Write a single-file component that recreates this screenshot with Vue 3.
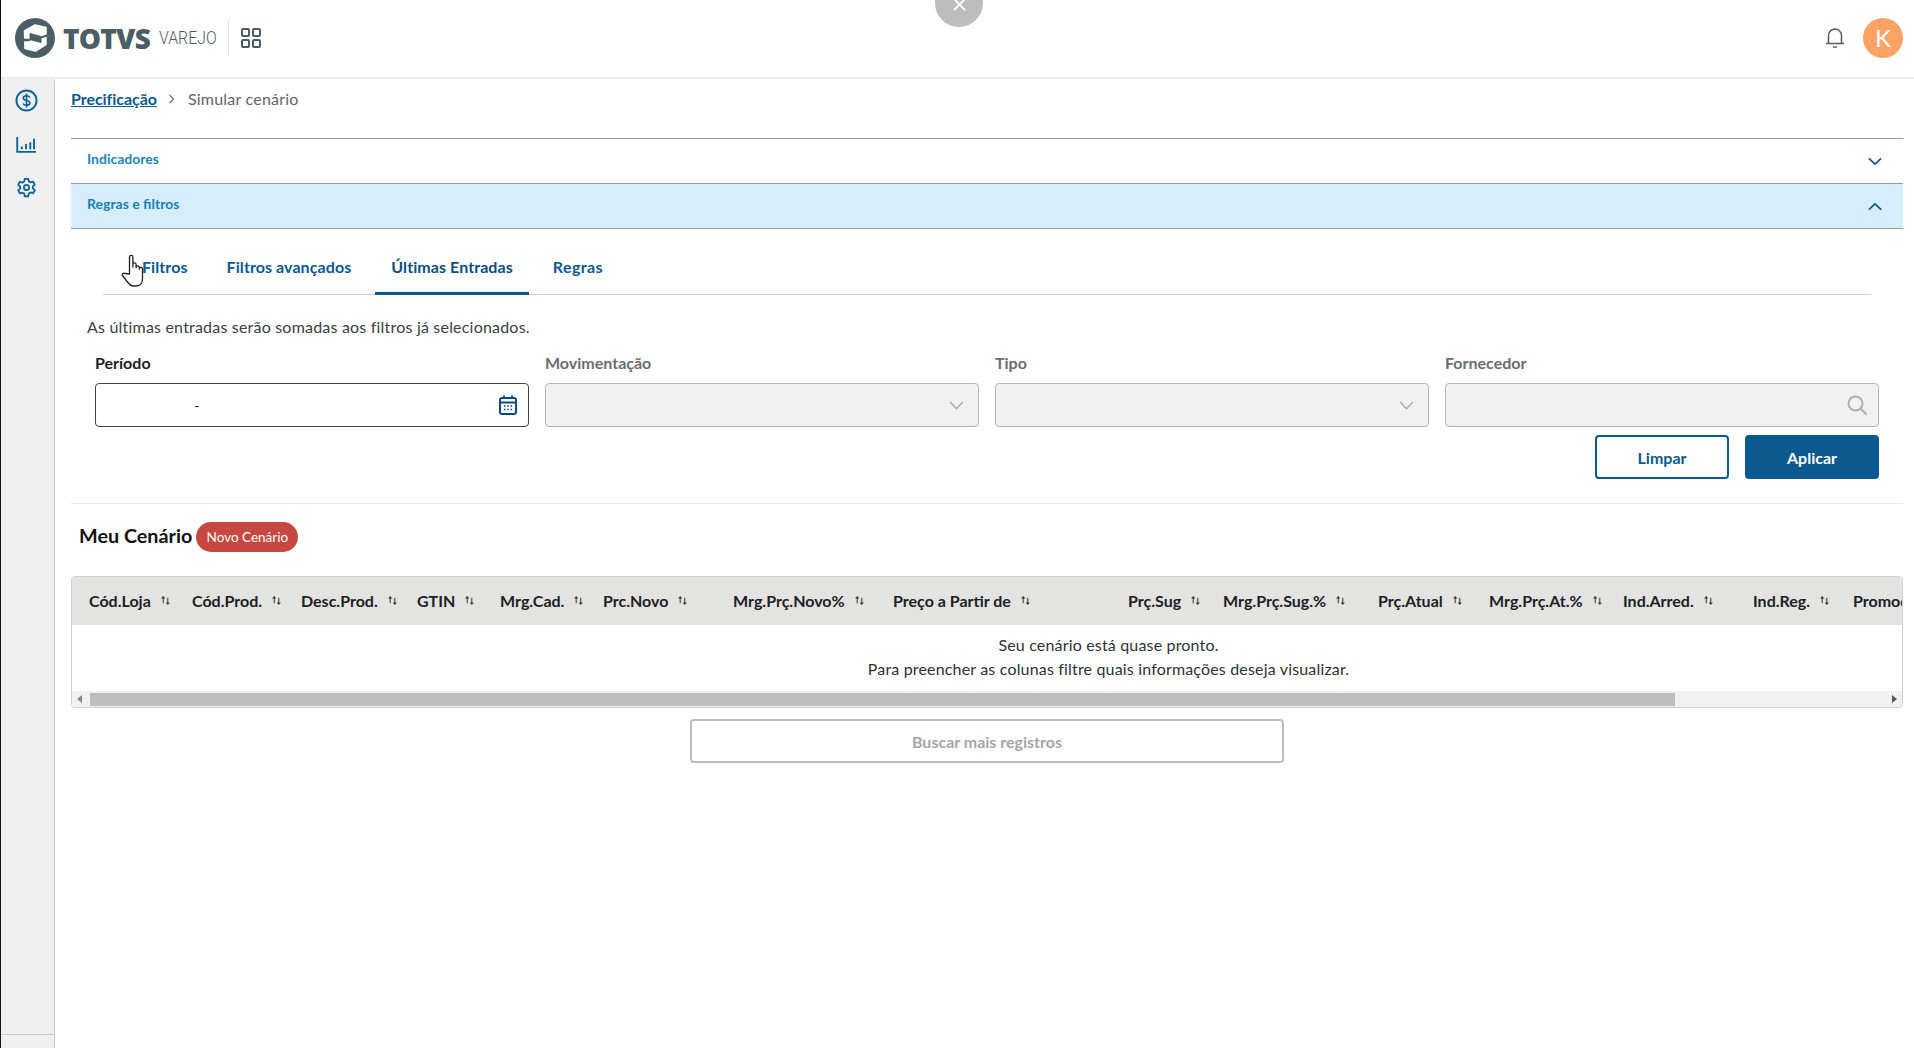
<script setup>
const columns = [
  { label: 'Cód.Loja', width: 120, lead: 17 },
  { label: 'Cód.Prod.', width: 109 },
  { label: 'Desc.Prod.', width: 116 },
  { label: 'GTIN', width: 83 },
  { label: 'Mrg.Cad.', width: 103 },
  { label: 'Prc.Novo', width: 130 },
  { label: 'Mrg.Prç.Novo%', width: 160 },
  { label: 'Preço a Partir de', width: 235 },
  { label: 'Prç.Sug', width: 95 },
  { label: 'Mrg.Prç.Sug.%', width: 155 },
  { label: 'Prç.Atual', width: 111 },
  { label: 'Mrg.Prç.At.%', width: 134 },
  { label: 'Ind.Arred.', width: 130 },
  { label: 'Ind.Reg.', width: 100 },
  { label: 'Promoção', width: 110 }
]
const tabs = ['Filtros', 'Filtros avançados', 'Últimas Entradas', 'Regras']
</script>

<template>
  <div class="page">
    <header class="topbar">
      <div class="brand">
        <svg class="logo" viewBox="0 0 40 40" width="40" height="40">
          <circle cx="20" cy="20" r="20" fill="#4c5d65" />
          <path d="M9.5 13 L20 7 L31 9.5 V26.5 L20.5 33 L10 30.5 Z" fill="#fff" stroke="#fff" stroke-width="1.5" stroke-linejoin="round" />
          <path d="M15 15.5 L26 18.5 V24.5 L15 21.5 Z" fill="#4c5d65" stroke="#4c5d65" stroke-linejoin="round" />
          <path d="M8 20.5 L15 21 L15.5 23 L8 23.5 Z" fill="#4c5d65" />
          <path d="M25.5 18.5 L33 16 V18.5 L25.5 20.5 Z" fill="#4c5d65" />
        </svg>
        <span class="totvs">TOTVS</span>
        <span class="varejo">VAREJO</span>
        <span class="brand-sep"></span>
        <svg class="apps" viewBox="0 0 20 20" width="20" height="20" fill="none" stroke="#4c5d65" stroke-width="2">
          <rect x="1" y="1" width="7" height="7" rx="1" />
          <rect x="12" y="1" width="7" height="7" rx="1" />
          <rect x="1" y="12" width="7" height="7" rx="1" />
          <rect x="12" y="12" width="7" height="7" rx="1" />
        </svg>
      </div>
      <div class="tools">
        <svg viewBox="0 0 20 22" width="20" height="22" fill="none" stroke="#4c5d65" stroke-width="1.5">
          <path d="M1 16.5 H19 M3.5 16.5 V9 a6.5 7 0 0 1 13 0 V16.5" />
          <path d="M8 19.5 Q10 21 12 19.5" />
        </svg>
        <span class="avatar">K</span>
      </div>
    </header>

    <div class="closer">
      <svg viewBox="0 0 14 14" width="13" height="13" stroke="#fff" stroke-width="2"><path d="M1 1 L13 13 M13 1 L1 13" /></svg>
    </div>

    <div class="body">
      <aside class="sidebar">
        <div class="side-icons">
          <svg viewBox="0 0 24 24" width="23" height="23" fill="none" stroke="#0b6296" stroke-width="2">
            <circle cx="12" cy="12" r="10.5" />
            <path d="M15.5 8.8 C15 7.4 13.6 7 12 7 C10 7 8.6 8 8.6 9.5 C8.6 11.2 10 11.7 12 12 C14 12.3 15.5 12.9 15.5 14.6 C15.5 16.1 14 17 12 17 C10.3 17 9 16.5 8.4 15.1 M12 4.8 V19.2" stroke-width="1.7" />
          </svg>
          <svg viewBox="0 0 22 18" width="21" height="17" fill="none" stroke="#0b6296" stroke-width="2">
            <path d="M1.2 1 V16.8 H21" />
            <path d="M6 14 V11 M10.5 14 V8.5 M15 14 V6.5 M19 14 V3" />
          </svg>
          <svg viewBox="0 0 24 24" width="21" height="21" fill="none" stroke="#0b6296" stroke-width="2" stroke-linejoin="round">
            <circle cx="12" cy="12" r="3" />
            <path d="M10 2 h4 l.6 3 a7.5 7.5 0 0 1 2 1.2 l2.9-1 2 3.5 -2.3 2 a7.5 7.5 0 0 1 0 2.4 l2.3 2 -2 3.5 -2.9-1 a7.5 7.5 0 0 1 -2 1.2 L14 22 h-4 l-.6-3 a7.5 7.5 0 0 1 -2-1.2 l-2.9 1 -2-3.5 2.3-2 a7.5 7.5 0 0 1 0-2.4 l-2.3-2 2-3.5 2.9 1 a7.5 7.5 0 0 1 2-1.2 Z" />
          </svg>
        </div>
        <div class="side-foot"></div>
      </aside>

      <main class="content">
        <nav class="crumbs">
          <a class="crumb-link">Precificação</a>
          <svg viewBox="0 0 8 12" width="7" height="10" fill="none" stroke="#5f6b70" stroke-width="1.4"><path d="M1.5 1 L6.5 6 L1.5 11" /></svg>
          <span class="crumb-now">Simular cenário</span>
        </nav>

        <section class="accordion">
          <div class="acc-row">
            <span>Indicadores</span>
            <svg viewBox="0 0 16 10" width="14" height="9" fill="none" stroke="#0a5a8f" stroke-width="2"><path d="M1 1.5 L8 8 L15 1.5" /></svg>
          </div>
          <div class="acc-row open">
            <span>Regras e filtros</span>
            <svg viewBox="0 0 16 10" width="14" height="9" fill="none" stroke="#0a5a8f" stroke-width="2"><path d="M1 8.5 L8 2 L15 8.5" /></svg>
          </div>
        </section>

        <div class="tabs">
          <button v-for="(t, i) in tabs" :key="t" class="tab" :class="{ active: i === 2 }">{{ t }}</button>
        </div>

        <p class="hint">As últimas entradas serão somadas aos filtros já selecionados.</p>

        <div class="fields">
          <div class="field">
            <label class="lbl dark">Período</label>
            <div class="input live">
              <span class="dash">-</span>
              <svg viewBox="0 0 18 20" width="18" height="20" fill="none" stroke="#0a4a7c" stroke-width="2">
                <rect x="1" y="3" width="16" height="16" rx="2" />
                <path d="M1 7.5 H17 M5 0.5 V4 M13 0.5 V4" />
                <path d="M5 11 h1.5 M8.3 11 h1.5 M11.6 11 h1.5 M5 14.5 h1.5 M8.3 14.5 h1.5 M11.6 14.5 h1.5" stroke-width="1.5" />
              </svg>
            </div>
          </div>
          <div class="field">
            <label class="lbl">Movimentação</label>
            <div class="input">
              <svg viewBox="0 0 16 10" width="15" height="9" fill="none" stroke="#a8a8a8" stroke-width="1.6"><path d="M1 1 L8 8.5 L15 1" /></svg>
            </div>
          </div>
          <div class="field">
            <label class="lbl">Tipo</label>
            <div class="input">
              <svg viewBox="0 0 16 10" width="15" height="9" fill="none" stroke="#a8a8a8" stroke-width="1.6"><path d="M1 1 L8 8.5 L15 1" /></svg>
            </div>
          </div>
          <div class="field">
            <label class="lbl">Fornecedor</label>
            <div class="input">
              <svg viewBox="0 0 20 20" width="20" height="20" fill="none" stroke="#b0b0b0" stroke-width="2"><circle cx="8.5" cy="8.5" r="7" /><path d="M13.5 13.5 L19.5 19.5" /></svg>
            </div>
          </div>
        </div>

        <div class="actions">
          <button class="btn ghost">Limpar</button>
          <button class="btn solid">Aplicar</button>
        </div>

        <div class="rule"></div>

        <div class="title-row">
          <h2 class="title">Meu Cenário</h2>
          <span class="badge">Novo Cenário</span>
        </div>

        <div class="table">
          <div class="thead">
            <div v-for="c in columns" :key="c.label" class="th" :style="{ flexBasis: c.width + 'px', paddingLeft: (c.lead || 0) + 'px' }">
              <span>{{ c.label }}</span>
              <svg viewBox="0 0 12 12" width="11" height="11" fill="none" stroke="#333" stroke-width="1.1">
                <path d="M3.5 9 V2 M1.8 3.8 L3.5 2 L5.2 3.8" />
                <path d="M8.5 3 V10 M6.8 8.2 L8.5 10 L10.2 8.2" />
              </svg>
            </div>
          </div>
          <div class="tbody">
            <p>Seu cenário está quase pronto.</p>
            <p>Para preencher as colunas filtre quais informações deseja visualizar.</p>
          </div>
          <div class="scrollbar">
            <span class="arrow left"></span>
            <span class="thumb"></span>
            <span class="arrow right"></span>
          </div>
        </div>

        <div class="more-wrap">
          <button class="more">Buscar mais registros</button>
        </div>
      </main>
    </div>

    <svg class="hand" viewBox="0 0 26 34" width="26" height="34" fill="#fff" stroke="#222" stroke-width="1.3" stroke-linejoin="round">
      <path d="M8.5 20 V3 a1.7 1.7 0 0 1 3.4 0 V13 V10.5 a1.6 1.6 0 0 1 3.2 0 V13.5 a1.6 1.6 0 0 1 3.2 0 V15 a1.6 1.6 0 0 1 3.2 0 V25 c0 4 -2.5 7 -7 7 h-2 c-3 0 -4.5 -2 -6 -4 L1.5 21.5 c-1 -1.5 1 -3.2 2.6 -2 Z" />
    </svg>
  </div>
</template>

<style>
html, body { margin: 0; padding: 0; background: #fff; }
</style>

<style scoped>
.page {
  position: relative;
  height: 1048px;
  width: 1914px;
  overflow: hidden;
  display: flex;
  flex-direction: column;
  font-family: "Lato", "Noto Sans", sans-serif;
  color: #2c3236;
  background: #fff;
  border-left: 1px solid #111;
  box-sizing: border-box;
}
.topbar {
  height: 79px;
  flex: none;
  display: flex;
  align-items: center;
  justify-content: space-between;
  padding: 0 11px 2px 14px;
  box-sizing: border-box;
  border-bottom: 2px solid #ececec;
}
.brand { display: flex; align-items: center; }
.logo { margin-right: 8px; }
.totvs {
  font-family: "Open Sans", sans-serif;
  font-weight: 800;
  font-size: 28px;
  letter-spacing: -0.8px;
  color: #4c5d65;
  margin-right: 9px;
}
.varejo {
  font-family: "Roboto", sans-serif;
  font-weight: 300;
  font-size: 18px;
  color: #4c5d65;
  transform: scaleX(0.88);
  transform-origin: left center;
  width: 57px;
}
.brand-sep { width: 1px; height: 36px; background: #e4e4e4; margin: 0 12px 0 12px; }
.tools { display: flex; align-items: center; gap: 18px; }
.avatar {
  width: 40px;
  height: 40px;
  border-radius: 50%;
  background: #ffa266;
  color: #fff;
  display: flex;
  align-items: center;
  justify-content: center;
  font-size: 24px;
}
.closer {
  position: absolute;
  left: 934px;
  top: -21px;
  width: 48px;
  height: 48px;
  border-radius: 50%;
  background: #bdbdbd;
  display: flex;
  align-items: center;
  justify-content: center;
  padding-top: 3px;
  box-sizing: border-box;
}
.body { flex: 1; display: flex; min-height: 0; }
.sidebar {
  width: 54px;
  flex: none;
  background: #f0f0f0;
  border-right: 1px solid #c9c9c9;
  box-sizing: border-box;
  border-top-right-radius: 3px;
  display: flex;
  flex-direction: column;
  justify-content: space-between;
}
.side-icons {
  display: flex;
  flex-direction: column;
  align-items: center;
  gap: 24px;
  padding: 10px 2px 0 0;
  height: 120px;
}
.side-foot { height: 13px; border-top: 1px solid #c9c9c9; }
.content {
  flex: 1;
  min-width: 0;
  padding: 0 11px 0 16px;
}
.crumbs {
  display: flex;
  align-items: center;
  gap: 11px;
  height: 39px;
  font-size: 16px;
  margin-bottom: 20px;
}
.crumb-link { color: #0a5a8f; font-weight: 700; text-decoration: underline; font-size: 16px; letter-spacing: -0.05px; }
.crumb-now { color: #5f6568; margin-left: 2px; letter-spacing: 0.22px; }
.accordion { display: flex; flex-direction: column; }
.acc-row {
  height: 45px;
  border-top: 1px solid #999;
  display: flex;
  justify-content: space-between;
  align-items: flex-start;
  padding: 11px 21px 0 16px;
  box-sizing: border-box;
  font-size: 14px;
  font-weight: 700;
  color: #1a86bd;
}
.acc-row svg { margin-top: 7px; }
.acc-row.open { background: #d6eefb; border-bottom: 1px solid #999; color: #1a7fb5; height: 46px; }
.tabs {
  margin: 0 32px 0 32px;
  height: 66px;
  border-bottom: 1px solid #cfcfcf;
  display: flex;
  align-items: flex-end;
  box-sizing: border-box;
}
.tab {
  border: 0;
  background: transparent;
  font: inherit;
  font-size: 16px;
  font-weight: 700;
  letter-spacing: 0.08px;
  color: #0a5a8f;
  height: 48px;
  padding: 0 16px 7px;
  margin-bottom: -1px;
  border-bottom: 3px solid transparent;
  box-sizing: border-box;
}
.tab:first-child { padding-left: 39px; padding-right: 23px; }
.tab:nth-child(3) { margin-left: 8px; margin-right: 8px; }
.tab:nth-child(4) { padding-left: 16px; letter-spacing: 0.4px; }
.tab.active { border-bottom-color: #0a5a8f; color: #0a4f80; }
.hint { margin: 22px 0 0 16px; font-size: 16px; letter-spacing: 0.2px; line-height: 20px; color: #3a4044; }
.fields {
  display: grid;
  grid-template-columns: repeat(4, 434px);
  gap: 16px;
  margin: 16px 0 0 24px;
}
.lbl { display: block; font-size: 16px; font-weight: 700; line-height: 20px; color: #6a6e70; margin-bottom: 10px; }
.lbl.dark { color: #1c2124; }
.input {
  height: 44px;
  border: 1px solid #b5b5b5;
  border-radius: 4px;
  background: #f1f1f1;
  display: flex;
  align-items: center;
  justify-content: flex-end;
  padding: 0 14px 0 0;
  box-sizing: border-box;
}
.input.live { background: #fff; border-color: #444; justify-content: space-between; padding: 0 11px 0 98px; }
.field:last-child .input { padding-right: 11px; }
.dash { font-size: 15px; color: #333; }
.actions { display: flex; gap: 16px; margin: 8px 0 0 1524px; }
.btn {
  width: 134px;
  height: 44px;
  border-radius: 4px;
  font: inherit;
  font-size: 16px;
  font-weight: 700;
  box-sizing: border-box;
}
.ghost { background: #fff; border: 2px solid #0a5a8f; color: #0a5a8f; }
.solid { background: #0a5a8f; border: 2px solid #0a5a8f; color: #fff; }
.rule { height: 1px; background: #e8e8e8; margin-top: 24px; }
.title-row { display: flex; align-items: center; gap: 4px; margin: 18px 0 0 8px; height: 30px; }
.title { margin: 0 0 5px; font-size: 19.8px; font-weight: 700; color: #111; }
.badge {
  width: 102px;
  height: 30px;
  border-radius: 15px;
  background: #c64840;
  color: #fff;
  font-size: 13.5px;
  display: flex;
  align-items: center;
  justify-content: center;
}
.table {
  margin: 24px 0 0 0;
  border: 1px solid #d0d0d0;
  border-radius: 4px;
  overflow: hidden;
  height: 132px;
  box-sizing: border-box;
  display: flex;
  flex-direction: column;
}
.thead { display: flex; background: #e3e3e2; height: 48px; flex: none; overflow: hidden; padding-bottom: 2px; box-sizing: border-box; }
.th {
  flex: none;
  display: flex;
  align-items: center;
  gap: 9px;
  font-size: 16px;
  font-weight: 700;
  color: #1c2124;
  box-sizing: border-box;
  white-space: nowrap;
}
.tbody { flex: 1; padding: 8px 0 0 243px; text-align: center; font-size: 16px; letter-spacing: 0.17px; line-height: 24px; color: #2c3236; }
.tbody p { margin: 0; }
.scrollbar { height: 16px; background: #f1f1f1; display: flex; align-items: center; flex: none; }
.thumb { width: 1585px; height: 13px; background: #bebebe; margin: 0 auto 0 8px; }
.arrow { width: 0; height: 0; border-top: 4px solid transparent; border-bottom: 4px solid transparent; }
.arrow.left { border-right: 5px solid #888; margin-left: 5px; }
.arrow.right { border-left: 5px solid #555; margin-right: 5px; }
.more-wrap { display: flex; justify-content: center; margin-top: 11px; }
.more {
  width: 594px;
  height: 44px;
  background: #fff;
  border: 2px solid #bdbdbd;
  border-radius: 4px;
  font: inherit;
  font-size: 16px;
  font-weight: 700;
  color: #a6a6a6;
}
.hand { position: absolute; left: 120px; top: 254px; }
</style>
